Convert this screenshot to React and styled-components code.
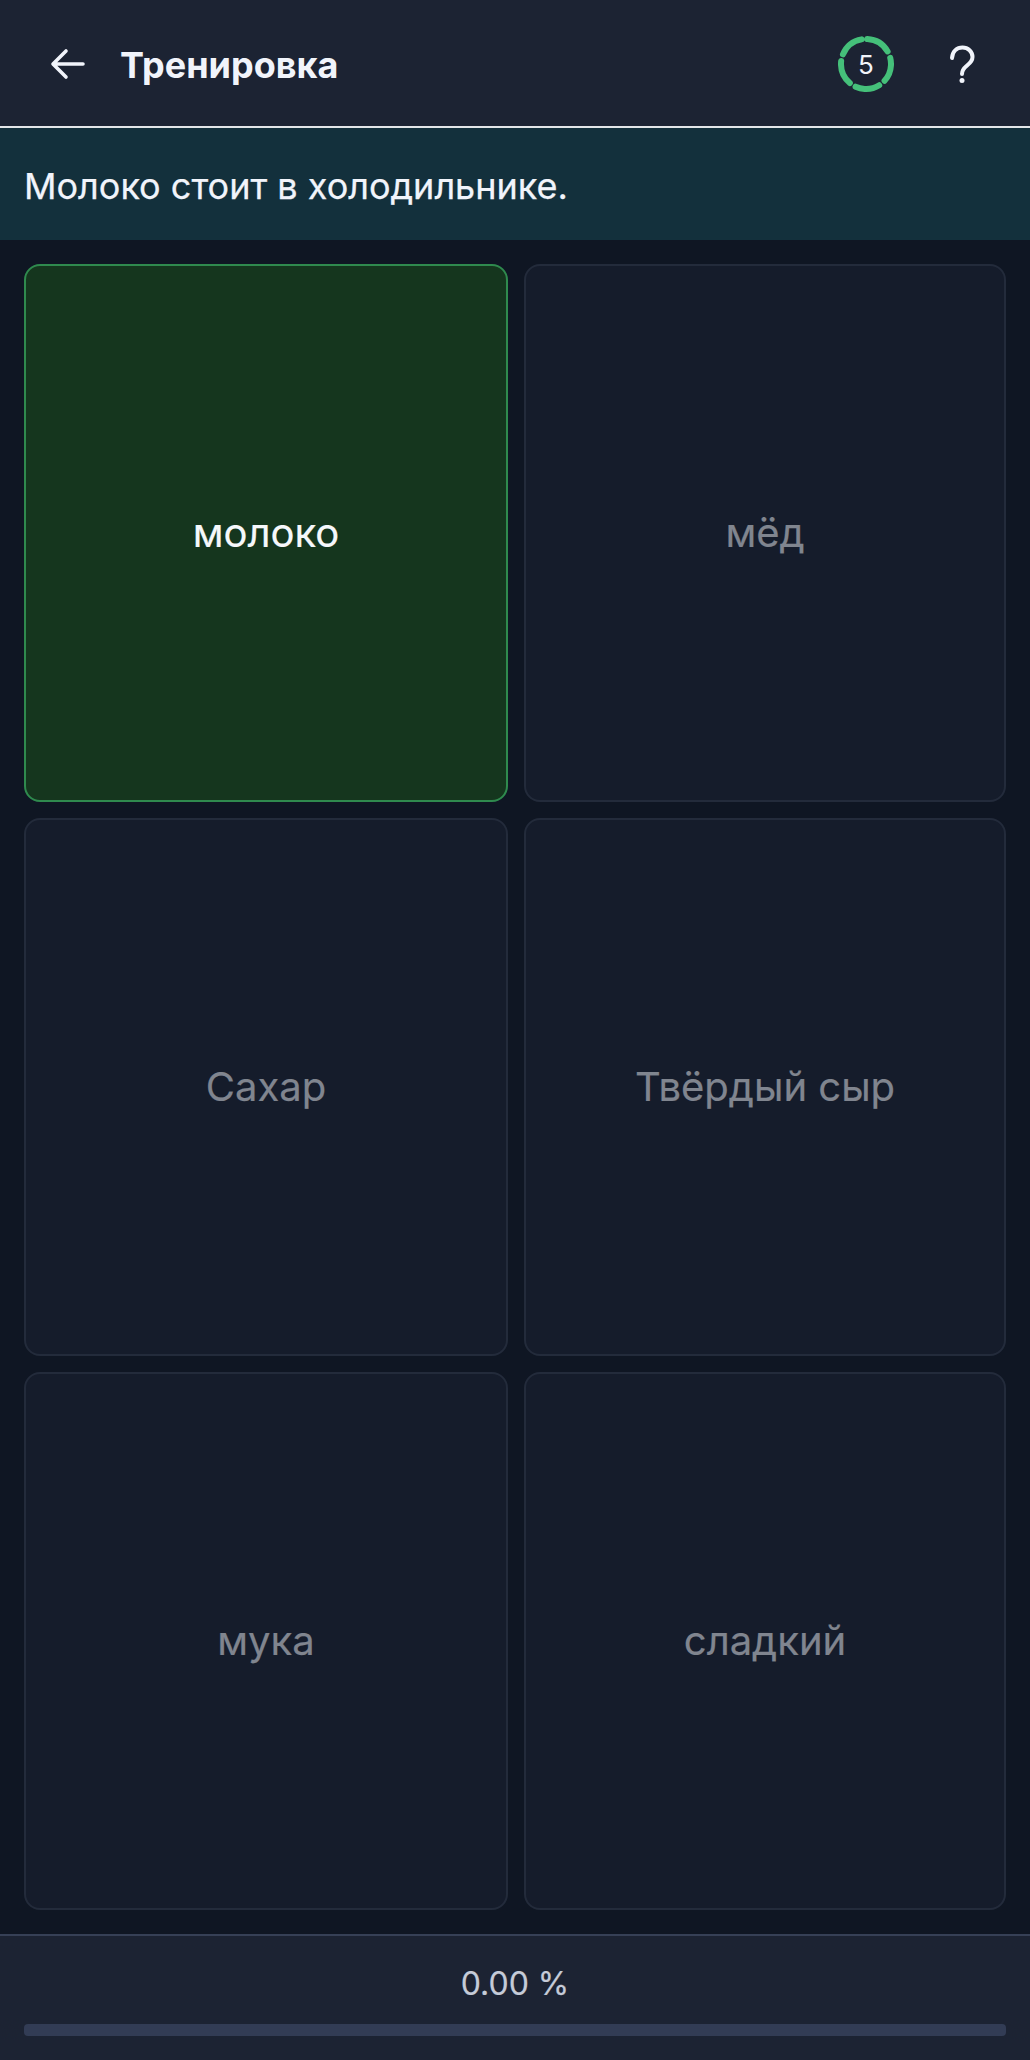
import React from "react";
import styled, { createGlobalStyle } from "styled-components";

const GlobalStyle = createGlobalStyle`
  html, body {
    margin: 0;
    padding: 0;
    background: #0f1623;
  }
  * {
    box-sizing: border-box;
  }
`;

const Page = styled.div`
  width: 1030px;
  height: 2060px;
  display: flex;
  flex-direction: column;
  background: #0f1623;
  font-family: Inter, "Liberation Sans", sans-serif;
  color: #f1f4fb;
`;

const Header = styled.header`
  height: 128px;
  flex: none;
  display: flex;
  align-items: center;
  padding: 2px 48px 0 48px;
  background: #1c2333;
  border-bottom: 2px solid #e3e5e8;
`;

const BackIcon = styled.svg`
  width: 40px;
  height: 40px;
  flex: none;
  margin-right: 32px;
`;

const Title = styled.h1`
  flex: 1;
  margin: 0;
  padding-top: 2px;
  font-size: 36px;
  line-height: 40px;
  font-weight: 700;
`;

const Timer = styled.div`
  position: relative;
  width: 56px;
  height: 56px;
  margin-right: 48px;
  display: flex;
  align-items: center;
  justify-content: center;
  font-size: 26px;
`;

const TimerRing = styled.svg`
  position: absolute;
  inset: 0;
`;

const HelpIcon = styled.svg`
  width: 40px;
  height: 48px;
  flex: none;
`;

const Banner = styled.div`
  height: 112px;
  flex: none;
  display: flex;
  align-items: center;
  padding: 3px 24px 0;
  background: #13303c;
  font-size: 36px;
  -webkit-text-stroke: 0.25px currentColor;
`;

const Grid = styled.main`
  flex: 1;
  display: grid;
  grid-template-columns: 484px 482px;
  grid-template-rows: repeat(3, 1fr);
  gap: 16px;
  padding: 24px;
`;

const Card = styled.button`
  display: flex;
  align-items: center;
  justify-content: center;
  padding: 0 0 1px;
  border-radius: 16px;
  border: 2px solid ${(p) => (p.$selected ? "#2f8a4e" : "#232b3b")};
  background: ${(p) => (p.$selected ? "#15361e" : "#151c2b")};
  color: ${(p) => (p.$selected ? "#f6f8fb" : "#80858f")};
  font-family: inherit;
  font-size: 40px;
  -webkit-text-stroke: 0.2px currentColor;
`;

const Footer = styled.footer`
  height: 126px;
  flex: none;
  display: flex;
  flex-direction: column;
  align-items: center;
  padding: 0 24px;
  background: #1c2333;
  border-top: 2px solid #364056;
`;

const Percent = styled.div`
  margin-top: 30px;
  font-size: 32px;
  line-height: 36px;
  color: #c5cbd8;
  -webkit-text-stroke: 0.2px currentColor;
`;

const Track = styled.div`
  width: 100%;
  height: 12px;
  margin-top: 22px;
  border-radius: 4px;
  background: #323c55;
`;

const options = [
  { id: 1, label: "молоко", selected: true },
  { id: 2, label: "мёд" },
  { id: 3, label: "Сахар" },
  { id: 4, label: "Твёрдый сыр" },
  { id: 5, label: "мука" },
  { id: 6, label: "сладкий" },
];

const App = () => {
  return (
    <Page>
      <GlobalStyle />
      <Header>
        <BackIcon viewBox="0 0 40 40" fill="none" stroke="#f1f4fb" strokeWidth="3.6" strokeLinecap="round" strokeLinejoin="round">
          <path d="M35 20H5.5M18 7 5 20 18 33" />
        </BackIcon>
        <Title>Тренировка</Title>
        <Timer>
          <TimerRing width="56" height="56" viewBox="0 0 56 56" fill="none">
            <circle
              cx="28"
              cy="28"
              r="25"
              stroke="#45c07a"
              strokeWidth="6"
              strokeLinecap="round"
              strokeDasharray="24.6 6.816"
              transform="rotate(-87 28 28)"
            />
          </TimerRing>
          5
        </Timer>
        <HelpIcon viewBox="0 0 40 48" fill="none" stroke="#f1f4fb" strokeWidth="4" strokeLinecap="round">
          <path d="M10 18C10.500 11 15 7.500 20.500 7.500 26 7.500 30.500 11.500 30.500 17 30.500 21.500 27.500 23.500 24.500 26 21.500 28.500 20 30 20 34" />
          <circle cx="20" cy="40.500" r="2.500" fill="#f1f4fb" stroke="none" />
        </HelpIcon>
      </Header>
      <Banner>Молоко стоит в холодильнике.</Banner>
      <Grid>
        {options.map((option) => (
          <Card key={option.id} $selected={option.selected}>
            {option.label}
          </Card>
        ))}
      </Grid>
      <Footer>
        <Percent>0.00 %</Percent>
        <Track />
      </Footer>
    </Page>
  );
};

export default App;
